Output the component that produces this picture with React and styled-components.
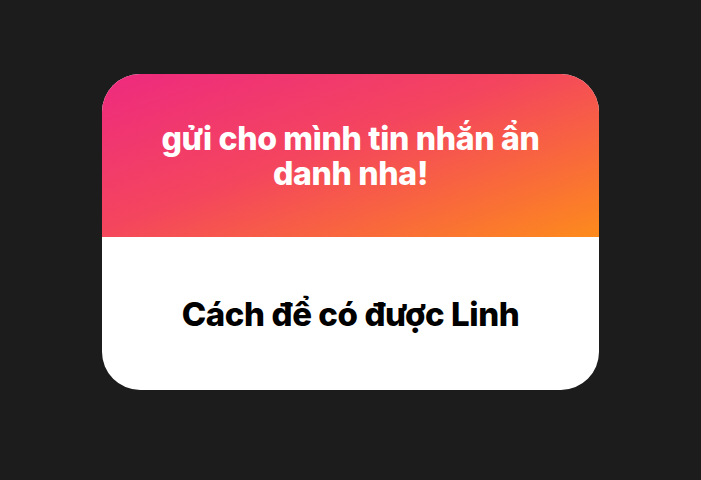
import React from 'react';
import styled, { createGlobalStyle } from 'styled-components';

const GlobalStyle = createGlobalStyle`
  html, body {
    margin: 0;
    padding: 0;
    background: #1c1c1c;
  }
  body {
    font-family: Inter, "Noto Sans", "DejaVu Sans", sans-serif;
  }
`;

const Page = styled.div`
  width: 701px;
  height: 480px;
  display: flex;
  align-items: flex-start;
  justify-content: center;
  padding-top: 74px;
  box-sizing: border-box;
  background: #1c1c1c;
`;

const Card = styled.div`
  width: 497px;
  border-radius: 38px;
  overflow: hidden;
  display: flex;
  flex-direction: column;
  background: #ffffff;
`;

const Header = styled.div`
  height: 163px;
  display: flex;
  align-items: center;
  justify-content: center;
  padding: 0 40px;
  background: linear-gradient(160deg, #ee2a7f 0%, #f4455e 45%, #f96a3a 75%, #fd8b1c 100%);
`;

const Prompt = styled.h2`
  margin: 0;
  color: #ffffff;
  font-size: 32px;
  font-weight: 800;
  line-height: 35px;
  text-align: center;
  letter-spacing: -0.3px;
`;

const Body = styled.div`
  height: 153px;
  display: flex;
  align-items: center;
  justify-content: center;
`;

const Answer = styled.p`
  margin: 0;
  color: #000000;
  font-size: 33px;
  font-weight: 800;
  letter-spacing: -0.4px;
`;

const App = () => {
  return (
    <>
      <GlobalStyle />
      <Page>
        <Card>
          <Header>
            <Prompt>gửi cho mình tin nhắn ẩn danh nha!</Prompt>
          </Header>
          <Body>
            <Answer>Cách để có được Linh</Answer>
          </Body>
        </Card>
      </Page>
    </>
  );
};

export default App;
